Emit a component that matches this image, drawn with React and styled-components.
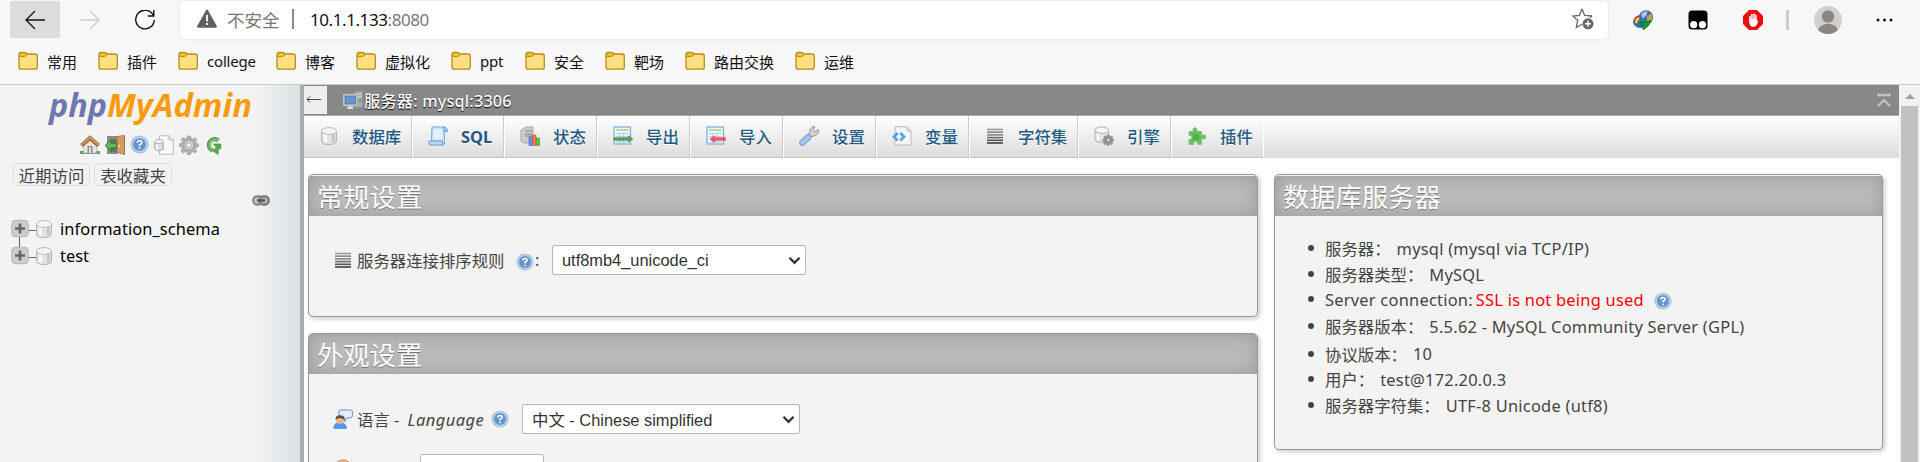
import React from "react";
import styled, { createGlobalStyle } from "styled-components";

const GlobalStyle = createGlobalStyle`
  * { box-sizing: border-box; }
  html, body { margin: 0; overflow: hidden; }
  body {
    font-family: "Noto Sans", "Noto Sans CJK SC", sans-serif;
    font-size: 16px;
    color: #444;
    background: #fff;
  }
  svg { display: block; flex: none; }
`;

const Window = styled.div`
  width: 1920px;
  height: 462px;
  display: flex;
  flex-direction: column;
  overflow: hidden;
`;

/* ---------- browser chrome ---------- */
const Chrome = styled.header`
  height: 85px;
  flex: none;
  background: #f7f7f7;
  border-bottom: 1px solid #ccc;
`;
const NavBar = styled.div`
  display: flex;
  align-items: center;
  height: 39px;
  padding-left: 10px;
`;
const NavButton = styled.div`
  width: ${(p) => p.$w || 50}px;
  height: 37px;
  display: flex;
  align-items: center;
  justify-content: center;
  border-radius: 2px;
  background: ${(p) => (p.$active ? "#dcdcdc" : "transparent")};
`;
const AddressBar = styled.div`
  width: 1428px;
  height: 38px;
  margin-left: 10px;
  padding: 0 14px 1px 17px;
  display: flex;
  align-items: center;
  background: #fff;
  border-radius: 5px;
  box-shadow: 0 0 4px rgba(0, 0, 0, 0.08);
  font-size: 17.5px;
  color: #777;
`;
const Insecure = styled.span`
  margin-left: 10px;
  width: 65px;
`;
const AddressRule = styled.i`
  width: 2px;
  height: 20px;
  background: #8a8a8a;
`;
const Url = styled.span`
  margin-left: 16px;
  flex: 1;
  font-size: 17px;
  letter-spacing: -0.42px;
  b { font-weight: 400; color: #111; }
`;
const Extensions = styled.div`
  display: flex;
  align-items: center;
  margin-left: 25px;
`;
const ExtIcon = styled.div`
  margin-left: ${(p) => p.$gap}px;
`;
const Bookmarks = styled.nav`
  display: flex;
  padding: 7px 0 0 18px;
  height: 45px;
`;
const Bookmark = styled.div`
  display: flex;
  align-items: center;
  height: 30px;
  width: ${(p) => p.$w}px;
  gap: 9px;
  font-size: 15px;
  letter-spacing: ${(p) => p.$ls || 0}px;
  color: #111;
  white-space: nowrap;
`;

/* ---------- page ---------- */
const Page = styled.div`
  flex: 1;
  display: flex;
  min-height: 0;
`;
const Sidebar = styled.aside`
  width: 304px;
  flex: none;
  background: linear-gradient(to right, #f3f3f3 255px, #dbe0e2 300px);
  border-right: 4px solid #aaa;
  color: #000;
`;
const Logo = styled.div`
  padding: 0 0 0 44px;
  height: 50px;
`;
const SideIcons = styled.div`
  display: flex;
  gap: 5px;
  padding-left: 80px;
  height: 20px;
`;
const QuickRow = styled.div`
  display: flex;
  gap: 4px;
  padding: 8px 0 0 13px;
`;
const QuickButton = styled.div`
  width: ${(p) => p.$w}px;
  height: 23px;
  border: 1px solid #ddd;
  border-radius: 5px;
  display: flex;
  align-items: center;
  justify-content: center;
  font-size: 16.4px;
  color: #444;
  white-space: nowrap;
`;
const LinkRow = styled.div`
  display: flex;
  justify-content: flex-end;
  padding: 9px 30px 0 0;
  height: 29px;
`;
const Tree = styled.div`
  display: flex;
  flex-direction: column;
  padding: 0 0 0 11px;
`;
const TreeItem = styled.div`
  display: flex;
  align-items: center;
  height: 27px;
  font-size: 16.4px;
  letter-spacing: ${(p) => p.$ls || 0}px;
  svg + svg { margin: 0 6px 0 -4px; }
`;

const Main = styled.main`
  width: 1595px;
  flex: none;
  background: #fff;
`;
const ServerBar = styled.div`
  height: 31px;
  background: #888;
  border-bottom: 1px solid #aaa;
  display: flex;
  align-items: center;
  color: #fff;
  text-shadow: 0 1px 1px #000;
  padding-right: 7px;
`;
const BackToggle = styled.div`
  width: 23px;
  height: 28px;
  background: #eee;
  margin-right: 16px;
  display: flex;
  padding: 8px 0 0 2px;
`;
const ServerName = styled.span`
  flex: 1;
  margin-left: 1px;
  font-size: 16.2px;
  letter-spacing: 0.2px;
  font-weight: 500;
`;
const Tabs = styled.nav`
  display: flex;
  height: 42px;
  background: linear-gradient(#fff, #dcdcdc);
`;
const Tab = styled.div`
  width: ${(p) => p.$w}px;
  border-right: 1px solid #fff;
  border-bottom: 1px solid #c0c0c0;
  box-shadow: inset -1px 0 0 ${(p) => (p.$last ? "transparent" : "#ccc")};
  display: flex;
  align-items: center;
  gap: 13px;
  padding: 0 0 1px 15px;
  font-size: 16.4px;
  font-weight: ${(p) => (p.$latin ? 700 : 500)};
  color: #235a81;
  text-shadow: 0 1px 0 #fff;
  white-space: nowrap;
`;
const Columns = styled.div`
  display: flex;
  align-items: flex-start;
  gap: 16px;
  padding: 16px 0 0 4px;
`;
const Stack = styled.div`
  display: flex;
  flex-direction: column;
  gap: 16px;
  width: 950px;
`;
const Card = styled.section`
  width: ${(p) => p.$w}px;
  height: ${(p) => p.$h}px;
  padding-top: ${(p) => (p.$flush ? 0 : 1)}px;
  background: #f3f3f3;
  border: 1px solid #999;
  border-radius: 5px;
  box-shadow: 2px 2px 5px #ccc;
  overflow: hidden;
`;
const CardTitle = styled.h2`
  margin: 0;
  height: 40px;
  padding: 3px 0 0 8px;
  display: flex;
  align-items: center;
  font-size: 26.3px;
  font-weight: 400;
  line-height: 1;
  color: #fff;
  text-shadow: 0 1px 0 #777;
  background: #bbb;
  box-shadow: inset 0 0 18px #999;
  white-space: nowrap;
`;
const Form = styled.div`
  display: flex;
  flex-direction: column;
  gap: 20px;
  padding: ${(p) => p.$top}px 0 0 24px;
`;
const FormRow = styled.div`
  display: flex;
  align-items: center;
  height: 30px;
  white-space: nowrap;
`;
const Label = styled.span`
  width: ${(p) => p.$w}px;
  margin-left: 4px;
  font-size: 16.4px;
  em { margin-left: 4px; letter-spacing: 0.5px; }
`;
const Colon = styled.span`
  width: 18px;
  padding-left: 1px;
`;
const Select = styled.div`
  width: ${(p) => p.$w}px;
  height: 30px;
  margin-left: ${(p) => p.$ml || 0}px;
  padding: 0 4px 0 9px;
  border: 1px solid #b5b5b5;
  border-radius: 2px;
  background: #fff;
  color: #333;
  display: flex;
  align-items: center;
  justify-content: space-between;
  font-family: "Liberation Sans", "Noto Sans CJK SC", sans-serif;
  font-size: 16.4px;
`;
const InfoList = styled.ul`
  list-style: none;
  margin: 0;
  padding: 19px 0 0 33px;
`;
const InfoItem = styled.li`
  display: flex;
  align-items: center;
  height: ${(p) => p.$h || 26}px;
  font-size: 16.4px;
  white-space: nowrap;
  &::before {
    content: "";
    width: 6px;
    height: 6px;
    border-radius: 50%;
    background: #444;
    margin-right: 11px;
  }
`;
const Value = styled.span`
  margin-left: ${(p) => p.$ml ?? 6}px;
  font-size: 16.4px;
  letter-spacing: 0.25px;
  color: ${(p) => (p.$alert ? "#f00" : "inherit")};
`;
const HelpSlot = styled.span`
  margin: 3px 0 0 ${(p) => p.$ml || 0}px;
`;
const Scrollbar = styled.div`
  flex: 1;
  background: #f1f1f1;
  display: flex;
  flex-direction: column;
  align-items: center;
`;
const ScrollArrow = styled.div`
  height: 21px;
  padding-top: 9px;
`;
const ScrollThumb = styled.div`
  width: 17px;
  flex: 1;
  background: #c1c1c1;
`;

/* ---------- icons ---------- */
const Svg = ({ s = 20, w, h, box = "0 0 20 20", children }) => (
  <svg width={w || s} height={h || s} viewBox={box} fill="none">{children}</svg>
);
const Folder = () => (
  <Svg>
    <path d="M1 4Q1 1.5 3 1.5H6.5Q8 1.5 9 3H17Q19.3 3 19.3 5V16Q19.3 18.2 17 18.2H3.2Q1 18.2 1 16Z" fill="#ffdf84" stroke="#b98d15" strokeWidth="1.3" />
    <path d="M1.3 4Q1.3 1.7 3 1.7H6.5Q8 1.7 8.7 3Q8 5.6 6.5 5.6H1.3Z" fill="#efc52d" stroke="#b98d15" />
  </Svg>
);
const Help = ({ s = 18 }) => (
  <Svg s={s}>
    <circle cx="10" cy="10" r="9.5" fill="#a9c4e2" />
    <circle cx="10" cy="10" r="7.2" fill="#6694c8" stroke="#d5e4f4" strokeWidth=".9" />
    <path d="M7.6 8.2Q7.6 6 10 6T12.4 8.1Q12.4 9.4 10.1 10.2V11.8M10.1 13V14.7" stroke="#fff" strokeWidth="1.7" />
  </Svg>
);
const Cylinder = ({ s = 20 }) => (
  <Svg s={s}>
    <path d="M2.5 5V15Q2.5 18.5 10 18.5T17.5 15V5" fill="#e2e2e2" stroke="#b4b4b4" />
    <path d="M5 8H8V17L5 16Z" fill="#f8f8f8" />
    <path d="M13 8H16V16L13 17Z" fill="#c8c8c8" />
    <ellipse cx="10" cy="5" rx="7.5" ry="3.4" fill="#f6f6f6" stroke="#bdbdbd" />
  </Svg>
);
const gearPath = "M8.5 1H11.5L12 3.5L13.8 4.2L16 2.8L18 5L16.4 7L17 8.5L19.4 9V11.8L17 12.2L16.2 14L17.7 16L15.8 18L13.6 16.5L12 17.2L11.5 19.5H8.5L8 17.2L6.3 16.5L4.2 18L2 16L3.5 13.8L3 12.2L.6 11.6V8.8L3 8.3L3.7 6.6L2.2 4.6L4.2 2.6L6.3 4L8 3.4Z";
const Gear = () => (
  <Svg>
    <path d={gearPath} fill="#b2b2b2" stroke="#959595" strokeWidth=".7" />
    <circle cx="10" cy="10" r="5" fill="#d2d2d2" stroke="#9b9b9b" />
    <circle cx="10" cy="10" r="2.4" fill="#f3f3f3" stroke="#999" strokeWidth=".7" />
  </Svg>
);
const Home = () => (
  <Svg>
    <path d="M0 16H20V19H0Z" fill="#5da851" />
    <path d="M3.5 10L10 4L16.5 10V18H3.5Z" fill="#e5e5e5" stroke="#aaa" strokeWidth=".7" />
    <path d="M7.5 11H12.5V18H7.5Z" fill="#8c8c8c" />
    <path d="M9 12H11V18H9Z" fill="#ddd" />
    <path d="M1.5 10.5L10 3L18.5 10.5" stroke="#9b6533" strokeWidth="4" />
    <path d="M1.8 9.8L10 2.6L18.2 9.8" stroke="#cf9a60" strokeWidth="2" />
  </Svg>
);
const Exit = () => (
  <Svg>
    <path d="M2 1H13V19H2Z" fill="#8a8d84" />
    <path d="M5 4H12V17H5Z" fill="#5f7666" />
    <path d="M12 1.5L19.5 .5V19.5L12 17Z" fill="#d39c62" stroke="#a87747" />
    <circle cx="14" cy="11" r="1" fill="#ffe7a0" />
    <path d="M0 10.5L6 5V8.3H11.5V12.8H6V16Z" fill="#5fb95b" stroke="#327f35" />
  </Svg>
);
const Docs = () => (
  <Svg>
    <path d="M5.5 .8H15L19.3 5V19.2H5.5Z" fill="#f9f9f9" stroke="#bbb" />
    <path d="M15 .8V5H19.3" fill="#e4e4e4" stroke="#bbb" />
    <path d="M.7 7V14Q5 17.5 9.2 14V7" fill="#ddd" stroke="#aaa" />
    <ellipse cx="5" cy="6.6" rx="4.3" ry="2" fill="#f6f6f6" stroke="#b5b5b5" />
    <path d="M3 9.5V14" stroke="#fff" strokeWidth="1.6" />
  </Svg>
);
const Reload = () => (
  <Svg>
    <path d="M14.4 5.6A5.8 5.8 0 1 0 8.6 15.4" stroke="#4a9d47" strokeWidth="4.2" />
    <path d="M14 5.2A5.6 5.6 0 1 0 8.6 15" stroke="#86c980" strokeWidth="1.9" />
    <path d="M9.5 9H16.8V13.6L14.2 14.2V19.5L8.2 15.5L12.6 12.8Z" fill="#58ad52" stroke="#3b8d3a" strokeWidth=".7" />
  </Svg>
);
const Chain = () => (
  <Svg w={18} h={11} box="0 0 18 11">
    <rect x="1.3" y="1.5" width="9" height="8" rx="3.5" fill="#ccc" stroke="#8b8b8b" strokeWidth="2.4" />
    <rect x="7.7" y="1.5" width="9" height="8" rx="3.5" fill="#bbb" stroke="#7c7c7c" strokeWidth="2.4" />
    <path d="M5 5.5H13" stroke="#555" strokeWidth="2.6" />
  </Svg>
);
const Plus = ({ line }) => (
  <Svg w={27} h={27} box="0 0 27 27">
    {line === "down" && <path d="M8.5 22V27" stroke="#555" />}
    {line === "up" && <path d="M8.5 0V5" stroke="#555" />}
    <path d="M17 15.5H27" stroke="#666" />
    <rect x=".8" y="5.3" width="16.4" height="16.4" rx="3.5" fill="#ccc" stroke="#b5b5b5" />
    <path d="M4 13.5H14M9 8.5V18.5" stroke="#666" strokeWidth="2.6" />
  </Svg>
);
const ServerIcon = () => (
  <Svg>
    <path d="M11 2L18 .5L19.5 2V17L12 18Z" fill="#aaa" stroke="#8f8f8f" strokeWidth=".6" />
    <path d="M14 4.5L18.5 4M14 7L18.5 6.5" stroke="#ddd" />
    <circle cx="17" cy="10.5" r="1.3" fill="#49b84b" />
    <rect x="0" y="4" width="14" height="12" rx="1" fill="#ccc" stroke="#aaa" strokeWidth=".6" />
    <rect x="2" y="6" width="10.5" height="8" fill="#6496d2" stroke="#3f70b0" strokeWidth=".7" />
    <path d="M5 16.3H10V19H4Z" fill="#ddd" />
  </Svg>
);
const Scroll = () => (
  <Svg>
    <path d="M4 1H17L16.3 5L16.5 18H2Q4 16 3.5 12Z" fill="#c6e0fa" stroke="#7ba7d9" />
    <path d="M15.8 1Q19.5 1 19.3 5.8L16 5.3Q15.5 2 15.8 1Z" fill="#a4caee" stroke="#6e9bcf" />
    <path d="M1 15H14.5Q14 17 15.5 19H2Q.5 18 1 15Z" fill="#b9d8f6" stroke="#6e9bcf" />
    <path d="M5.5 3H14L14.5 13H5.5Z" fill="#e0f0ff" />
  </Svg>
);
const Status = () => (
  <Svg>
    <path d="M1 4L6 1H13V17H4L1 15Z" fill="#ccc" stroke="#a9a9a9" />
    <path d="M5 5H12M5 8H12M5 10H12" stroke="#888" />
    <rect x="9" y="11" width="3.3" height="8.5" fill="#5c94ea" stroke="#3671ca" strokeWidth=".6" />
    <rect x="12.7" y="9" width="3.3" height="10.5" fill="#ff7548" stroke="#dd4c22" strokeWidth=".6" />
    <rect x="16.3" y="12" width="3.3" height="7.5" fill="#58c840" stroke="#379d2b" strokeWidth=".6" />
  </Svg>
);
const Sheet = ({ out }) => (
  <Svg>
    <rect x="1" y="1" width="16.5" height="17" fill="#eef5fd" stroke="#86aede" strokeWidth="1.3" />
    <path d="M3 4H15.5" stroke="#a8d68a" strokeWidth="1.6" />
    <path d="M3 7.5H15.5M3 10.5H15.5M3 16H15.5M6.5 7V17M10.5 7V17" stroke="#b5cdea" />
    {out ? (
      <path d="M1 11.7H15.5V9.8L19.8 13L15.5 16.2V14.3H1Z" fill="#5aa551" stroke="#3b8139" strokeWidth=".6" />
    ) : (
      <path d="M19.5 11.7H8.5V9.8L4 13L8.5 16.2V14.3H19.5Z" fill="#fa5860" stroke="#dc3945" strokeWidth=".6" />
    )}
  </Svg>
);
const Wrench = () => (
  <Svg>
    <path d="M11 6Q10 2.5 14 .6L16 .8L14.3 3.8L16 5.8L19.3 3.6Q20.2 8 16.5 9.2L12.8 10.7L9.3 7.5Z" fill="#d3d3d3" stroke="#969696" />
    <path d="M3.5 16.5L9 11.3" stroke="#658fd7" strokeWidth="6.4" strokeLinecap="round" />
    <path d="M3.5 16.5L9 11.3" stroke="#a9c6f5" strokeWidth="4.6" strokeLinecap="round" />
    <path d="M3 16L9 10.5" stroke="#8db2ec" />
  </Svg>
);
const Variable = () => (
  <Svg>
    <path d="M3 .8H15L19 5V19H3Z" fill="#f7f7f7" stroke="#bbb" />
    <path d="M15 .8V5H19" fill="#e3e3e3" stroke="#bbb" />
    <path d="M5.7 7L2 10.7L5.7 14.4M8.3 7L12 10.7L8.3 14.4" stroke="#58a0ea" strokeWidth="2.8" />
  </Svg>
);
const Lines = () => (
  <Svg>
    {[3.5, 6.2, 8.9, 11.6, 14.3, 17].map((y, i) => (
      <path key={y} d={`M2 ${y}H18`} stroke={["#999", "#888", "#858585", "#6a6a6a", "#555", "#3f3f3f"][i]} strokeWidth="1.6" />
    ))}
  </Svg>
);
const Engine = () => (
  <Svg>
    <path d="M1 4.2V13Q1 16.5 8 16.5T14.5 13V4.2" fill="#e2e2e2" stroke="#b4b4b4" />
    <ellipse cx="7.8" cy="4.2" rx="6.8" ry="3.2" fill="#f6f6f6" stroke="#b5b5b5" />
    <path d="M4 8V14" stroke="#fff" strokeWidth="2" />
    <g transform="translate(8.5 8.3) scale(.58)">
      <path d={gearPath} fill="#999" stroke="#7a7a7a" />
      <circle cx="10" cy="10" r="4" fill="#ccc" stroke="#707070" strokeWidth="1.5" />
    </g>
  </Svg>
);
const Puzzle = () => (
  <Svg>
    <path d="M2 5.5H6.5Q5 2 8 1.8Q11 2 9.7 5.5H14.5V9.5Q18.8 7.7 18.8 11Q18.8 14.2 14.5 12.5V18.5H10.5Q11.4 15.6 8.5 15.5Q5.6 15.6 6.5 18.5H2V13.5Q5 13.8 5 11.3Q5 9 2 9.5Z" fill="#69bd60" stroke="#82c87b" />
    <path d="M6 8H12V14H6Z" fill="#52af4d" />
  </Svg>
);
const Person = () => (
  <Svg>
    <path d="M7.5 1H17.5Q19.4 1 19.4 3V6.5Q19.4 8.6 17.5 8.8L14 9L11.5 12.5V9H8.5Q6 8.6 6 7V3Q6 1 7.5 1Z" fill="#e3efff" stroke="#5e8ece" />
    <path d="M.8 19.4Q.6 13.8 7 13.8T13.4 19.4Z" fill="#4f9af0" stroke="#3873b9" strokeWidth=".6" />
    <circle cx="7" cy="11" r="4" fill="#e7b48c" />
    <path d="M2.5 11Q2 6.3 7 6.3T11.3 10.5Q8 9 6 9Q4 9.5 2.5 11Z" fill="#754829" />
  </Svg>
);
const Palette = () => (
  <Svg>
    <path d="M10 1C15 1 19 5 19 10S15 19 10 19S1 15 1 10S5 1 10 1Z" fill="#e9b98b" stroke="#c98850" />
  </Svg>
);
const Chevron = () => (
  <Svg w={13} h={9} box="0 0 13 9">
    <path d="M1.5 1.8L6.5 6.8L11.5 1.8" stroke="#333" strokeWidth="2.3" />
  </Svg>
);

const bookmarks = [
  ["常用", 80], ["插件", 80], ["college", 98, -0.2], ["博客", 80], ["虚拟化", 95],
  ["ppt", 74, -0.2], ["安全", 80], ["靶场", 80], ["路由交换", 110], ["运维", 80],
];
const tabs = [
  ["数据库", 109, <Cylinder />], ["SQL", 92, <Scroll />], ["状态", 93, <Status />],
  ["导出", 93, <Sheet out />], ["导入", 93, <Sheet />], ["设置", 93, <Wrench />],
  ["变量", 93, <Variable />], ["字符集", 109, <Lines />], ["引擎", 93, <Engine />],
  ["插件", 92, <Puzzle />],
];

function BrowserChrome() {
  return (
    <Chrome>
      <NavBar>
        <NavButton $active>
          <Svg><path d="M10 1L1 10L10 19M1 10H20" stroke="#111" strokeWidth="1.3" /></Svg>
        </NavButton>
        <NavButton $w={60}>
          <Svg><path d="M10 1L19 10L10 19M0 10H19" stroke="#cfcfcf" strokeWidth="1.3" /></Svg>
        </NavButton>
        <NavButton>
          <Svg><path d="M18.4 5.5A9.3 9.3 0 1 0 19.3 10M18.8 0V6H12.8" stroke="#111" strokeWidth="1.4" /></Svg>
        </NavButton>
        <AddressBar>
          <Svg>
            <path d="M9 1.2Q10 -.2 11 1.2L19.8 17Q20.2 18.8 18.5 18.8H1.5Q-.2 18.8 .2 17Z" fill="#606060" />
            <path d="M10 6V12.5M10 14V16" stroke="#fff" strokeWidth="1.8" />
          </Svg>
          <Insecure>不安全</Insecure>
          <AddressRule />
          <Url><b>10.1.1.133</b>:8080</Url>
          <Svg w={22} h={22} box="0 0 22 22">
            <path d="M10 1L12.7 7.4L20 8M10 1L7.4 7.4L.9 8L5.7 12.5L4.3 19.5L10 16.3M20 8L18 9.7" stroke="#666" strokeWidth="1.3" />
            <circle cx="16" cy="15.8" r="5.5" fill="#666" />
            <path d="M13 15.8H19M16 12.8V18.8" stroke="#fff" strokeWidth="1.4" />
          </Svg>
        </AddressBar>
        <Extensions>
          <ExtIcon $gap={0}>
            <Svg>
              <ellipse cx="7.5" cy="12" rx="7.5" ry="6" fill="#2a6fc4" />
              <path d="M1.5 12.5Q1.5 6 8 6" stroke="#e33724" strokeWidth="1.8" />
              <path d="M3.2 13Q3 8 8 7.8" stroke="#ffe23c" strokeWidth="2.2" />
              <path d="M5 13.5Q5 10 8 9.8" stroke="#35b04a" strokeWidth="1.8" />
              <circle cx="13" cy="7.2" r="7" fill="#3f6ea6" />
              <path d="M8 4.5Q10.5 .8 14.5 1.2L13.5 5.5L9.5 8.5Z" fill="#a9c4e4" />
              <path d="M14 6L18.5 3.8Q20.4 7 18 11.5L14 12Z" fill="#b6a94a" />
              <path d="M5.5 12L9 12.6L18.5 10.5L15 16.2L10 20L9.8 16Z" fill="#159b26" stroke="#07530f" strokeWidth=".6" />
            </Svg>
          </ExtIcon>
          <ExtIcon $gap={35}>
            <Svg>
              <rect x=".5" y=".5" width="19" height="19" rx="3.5" fill="#000" />
              <circle cx="5.7" cy="14.7" r="3.6" fill="#fff" />
              <circle cx="14.5" cy="14.7" r="3.6" fill="#fff" />
            </Svg>
          </ExtIcon>
          <ExtIcon $gap={35}>
            <Svg>
              <path d="M6 0H14L20 6V14L14 20H6L0 14V6Z" fill="#ee0b0b" />
              <path d="M6.9 11V6.5M8.9 10V4.4M11 10V4M13 10V5.2" stroke="#fff" strokeWidth="1.5" strokeLinecap="round" />
              <path d="M6.2 9H13.7L14 11.4L15.6 10L14.3 13.8Q13.2 16.8 11 16.8H9.5Q6.7 16.5 6.2 12Z" fill="#fff" />
            </Svg>
          </ExtIcon>
          <ExtIcon $gap={23}>
            <Svg w={3} h={20} box="0 0 3 20"><path d="M0 0H3V20H0Z" fill="#ccc" /></Svg>
          </ExtIcon>
          <ExtIcon $gap={25}>
            <Svg s={28} box="0 0 28 28">
              <circle cx="14" cy="14" r="14" fill="#d2d0cd" />
              <circle cx="14" cy="10.5" r="6.2" fill="#8a8683" />
              <path d="M4 24Q7 17.8 14 17.8T24 24Q20 28 14 28T4 24Z" fill="#8a8683" />
            </Svg>
          </ExtIcon>
          <ExtIcon $gap={34}>
            <Svg w={18} h={4} box="0 0 18 4">
              <circle cx="2" cy="2" r="1.5" fill="#111" /><circle cx="8.5" cy="2" r="1.5" fill="#111" /><circle cx="15" cy="2" r="1.5" fill="#111" />
            </Svg>
          </ExtIcon>
        </Extensions>
      </NavBar>
      <Bookmarks>
        {bookmarks.map(([name, w, ls]) => (
          <Bookmark key={name} $w={w} $ls={ls}><Folder />{name}</Bookmark>
        ))}
      </Bookmarks>
    </Chrome>
  );
}

function Navigation() {
  return (
    <Sidebar>
      <Logo>
        <svg width="214" height="50" viewBox="0 0 214 50" fontFamily="Open Sans, sans-serif" fontSize="31.5" fontWeight="700" fontStyle="italic">
          <text x="5" y="31.5" textLength="58" lengthAdjust="spacingAndGlyphs" fill="#6c78af">php</text>
          <text x="63" y="31.5" textLength="145" lengthAdjust="spacingAndGlyphs" fill="#f89c0e">MyAdmin</text>
        </svg>
      </Logo>
      <SideIcons><Home /><Exit /><Help s={19} /><Docs /><Gear /><Reload /></SideIcons>
      <QuickRow>
        <QuickButton $w={77}>近期访问</QuickButton>
        <QuickButton $w={78}>表收藏夹</QuickButton>
      </QuickRow>
      <LinkRow><Chain /></LinkRow>
      <Tree>
        <TreeItem $ls={0.1}><Plus line="down" /><Cylinder s={20} />information_schema</TreeItem>
        <TreeItem><Plus line="up" /><Cylinder s={20} />test</TreeItem>
      </Tree>
    </Sidebar>
  );
}

function GeneralSettings() {
  return (
    <Card $w={950} $h={143}>
      <CardTitle>常规设置</CardTitle>
      <Form $top={29}>
        <FormRow>
          <Lines />
          <Label $w={159}>服务器连接排序规则</Label>
          <HelpSlot><Help /></HelpSlot>
          <Colon>:</Colon>
          <Select $w={254}>utf8mb4_unicode_ci<Chevron /></Select>
        </FormRow>
      </Form>
    </Card>
  );
}

function AppearanceSettings() {
  return (
    <Card $w={950} $h={240} $flush>
      <CardTitle>外观设置</CardTitle>
      <Form $top={30}>
        <FormRow>
          <Person />
          <Label $w={134}>语言 - <em>Language</em></Label>
          <Help />
          <Select $w={278} $ml={13}>中文 - Chinese simplified<Chevron /></Select>
        </FormRow>
        <FormRow>
          <Palette />
          <Select $w={124} $ml={67} />
        </FormRow>
      </Form>
    </Card>
  );
}

function DatabaseServer() {
  return (
    <Card $w={609} $h={276}>
      <CardTitle>数据库服务器</CardTitle>
      <InfoList>
        <InfoItem>服务器：<Value>mysql (mysql via TCP/IP)</Value></InfoItem>
        <InfoItem>服务器类型：<Value>MySQL</Value></InfoItem>
        <InfoItem $h={24}>
          <Value $ml={0}>Server connection:</Value>
          <Value $ml={3} $alert>SSL is not being used</Value>
          <HelpSlot $ml={10}><Help /></HelpSlot>
        </InfoItem>
        <InfoItem $h={30}>服务器版本：<Value>5.5.62 - MySQL Community Server (GPL)</Value></InfoItem>
        <InfoItem $h={25}>协议版本：<Value>10</Value></InfoItem>
        <InfoItem>用户：<Value>test@172.20.0.3</Value></InfoItem>
        <InfoItem>服务器字符集：<Value>UTF-8 Unicode (utf8)</Value></InfoItem>
      </InfoList>
    </Card>
  );
}

export default function App() {
  return (
    <Window>
      <GlobalStyle />
      <BrowserChrome />
      <Page>
        <Navigation />
        <Main>
          <ServerBar>
            <BackToggle>
              <Svg w={16} h={11} box="0 0 16 11"><path d="M4 2.5L1 5.5L4 8.5M1 5.5H15" stroke="#444" /></Svg>
            </BackToggle>
            <ServerIcon />
            <ServerName>服务器: mysql:3306</ServerName>
            <Svg w={16} h={15} box="0 0 16 15"><path d="M1 2H15M2 13L8 7L14 13" stroke="#c0c0c0" strokeWidth="2.4" /></Svg>
          </ServerBar>
          <Tabs>
            {tabs.map(([name, w, icon], i) => (
              <Tab key={i} $w={w} $latin={name === "SQL"} $last={i === tabs.length - 1}>{icon}{name}</Tab>
            ))}
          </Tabs>
          <Columns>
            <Stack><GeneralSettings /><AppearanceSettings /></Stack>
            <DatabaseServer />
          </Columns>
        </Main>
        <Scrollbar>
          <ScrollArrow><Svg w={10} h={5} box="0 0 10 5"><path d="M0 5L5 0L10 5Z" fill="#a0a0a0" /></Svg></ScrollArrow>
          <ScrollThumb />
        </Scrollbar>
      </Page>
    </Window>
  );
}
